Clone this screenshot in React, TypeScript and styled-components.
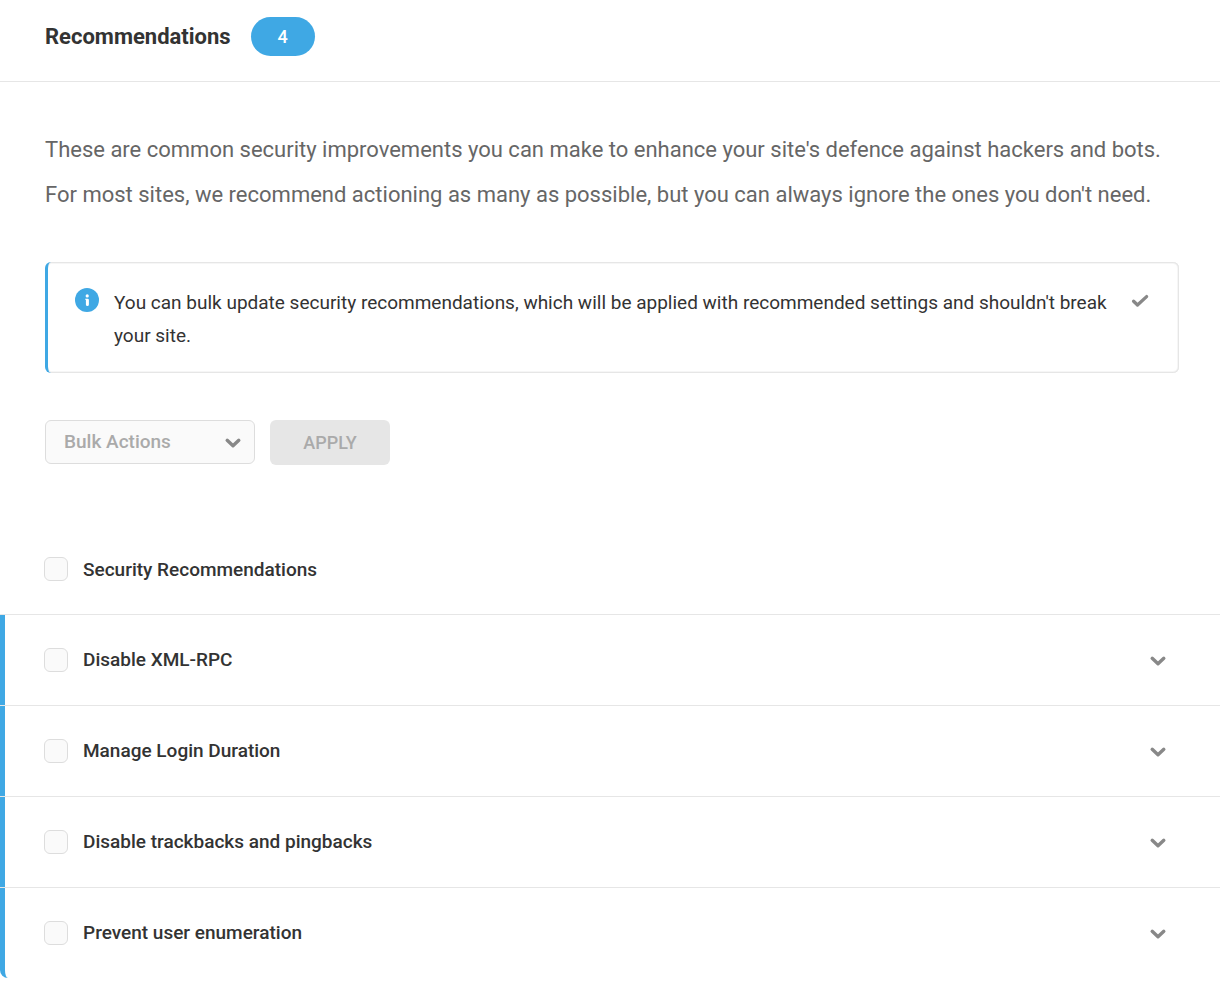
import React from "react";
import styled, { createGlobalStyle } from "styled-components";

const color = {
  text: "#333333",
  muted: "#666666",
  icon: "#888888",
  disabled: "#aaaaaa",
  line: "#e6e6e6",
  field: "#fafafa",
  fieldLine: "#dddddd",
  blue: "#3fa8e4",
};

const GlobalStyle = createGlobalStyle`
  *, *::before, *::after { box-sizing: border-box; }
  body {
    margin: 0;
    background: #fff;
    color: ${color.text};
    font-family: Roboto, "Liberation Sans", sans-serif;
    font-size: 19px;
    line-height: 33px;
  }
`;

const Header = styled.header`
  display: flex;
  align-items: center;
  gap: 20px;
  padding: 17px 45px 25px;
  border-bottom: 1px solid ${color.line};
`;

const Title = styled.h2`
  margin: 0;
  font-size: 22px;
  font-weight: 700;
  line-height: 39px;
`;

const CountTag = styled.span`
  min-width: 64px;
  border-radius: 20px;
  background: ${color.blue};
  color: #fff;
  font-size: 18px;
  font-weight: 500;
  line-height: 39px;
  text-align: center;
`;

const Body = styled.div`
  padding: 45px 41px 0 45px;
`;

const Intro = styled.p`
  margin: 0;
  color: ${color.muted};
  font-size: 22px;
  line-height: 45px;
`;

const Notice = styled.div`
  display: flex;
  align-items: flex-start;
  margin-top: 45px;
  padding: 24px 29px 21px 27px;
  border-left: 3px solid ${color.blue};
  border-radius: 6px;
  box-shadow:
    inset -1px 0 ${color.line},
    inset 0 1px ${color.line},
    inset 0 -1px ${color.line},
    inset -2px 0 #f6f6f6,
    inset 0 2px #f6f6f6,
    inset 0 -2px #f6f6f6;
`;

const NoticeIcon = styled.svg`
  flex: none;
  width: 24px;
  height: 24px;
  margin: 2px 15px 0 0;
`;

const NoticeText = styled.p`
  flex: 1;
  margin: 0 16px 0 0;
`;

const IconButton = styled.button`
  display: flex;
  flex: none;
  padding: 0;
  border: 0;
  background: none;
  color: ${color.icon};
  cursor: pointer;
`;

const Glyph = styled.svg`
  display: block;
  width: 20px;
  height: 32px;
  fill: none;
  stroke: currentColor;
  stroke-linecap: round;
  stroke-linejoin: round;
`;

const Actions = styled.form`
  display: flex;
  align-items: flex-start;
  gap: 15px;
  margin-top: 47px;
`;

const SelectWrap = styled.div`
  display: grid;
  width: 210px;
  color: ${color.icon};

  > * { grid-area: 1 / 1; }
  > svg {
    place-self: center end;
    margin-right: 12px;
    pointer-events: none;
  }
`;

const Select = styled.select`
  appearance: none;
  width: 100%;
  height: 44px;
  padding: 0 40px 2px 18px;
  border: 1px solid ${color.fieldLine};
  border-radius: 6px;
  background: ${color.field};
  color: ${color.disabled};
  font: 500 19px Roboto, "Liberation Sans", sans-serif;
  opacity: 1;
`;

const ApplyButton = styled.button`
  min-width: 120px;
  height: 45px;
  padding: 0 24px;
  border: 0;
  border-radius: 6px;
  background: ${color.line};
  color: ${color.disabled};
  font: 500 18px Roboto, "Liberation Sans", sans-serif;
  text-transform: uppercase;
`;

const ListHead = styled.div`
  display: flex;
  align-items: center;
  margin-top: 59px;
  height: 90px;
  padding: 0 44px;
`;

const List = styled.ul`
  margin: 0;
  padding: 0;
  list-style: none;
`;

const Item = styled.li`
  border-top: 1px solid ${color.line};
`;

const ItemRow = styled.div<{ $last: boolean }>`
  display: flex;
  align-items: center;
  justify-content: space-between;
  height: 90px;
  padding: 0 52px 0 39px;
  border-left: 5px solid ${color.blue};
  border-bottom-left-radius: ${(p) => (p.$last ? "8px" : "0")};
`;

const CheckLabel = styled.label`
  display: flex;
  align-items: center;
  gap: 15px;
  font-weight: 500;
`;

const ItemName = styled.span`
  padding-bottom: 2px;
`;

const Checkbox = styled.input`
  appearance: none;
  width: 24px;
  height: 24px;
  margin: 0;
  border: 1px solid ${color.fieldLine};
  border-radius: 6px;
  background: ${color.field};

  &:checked {
    border-color: ${color.blue};
    background: ${color.blue};
  }
`;

const Chevron = () => (
  <Glyph viewBox="0 0 20 32" strokeWidth="3.4" aria-hidden="true">
    <path d="M4.2 14.3 10 19.8l5.8-5.5" />
  </Glyph>
);

const items = [
  "Disable XML-RPC",
  "Manage Login Duration",
  "Disable trackbacks and pingbacks",
  "Prevent user enumeration",
];

export default function App() {
  return (
    <>
      <GlobalStyle />
      <main>
        <Header>
          <Title>Recommendations</Title>
          <CountTag>4</CountTag>
        </Header>
        <Body>
          <Intro>
            These are common security improvements you can make to enhance your site's defence
            against hackers and bots. For most sites, we recommend actioning as many as possible,
            but you can always ignore the ones you don't need.
          </Intro>
          <Notice>
            <NoticeIcon viewBox="0 0 24 24" aria-hidden="true">
              <circle cx="12" cy="12" r="12" fill={color.blue} />
              <circle cx="12.2" cy="7.9" r="1.6" fill="#fff" />
              <path d="M10.2 10.8h2.4a1.3 1.3 0 0 1 1.3 1.3v4.3a1.5 1.5 0 0 1-3 0v-4.6h-.7z" fill="#fff" />
            </NoticeIcon>
            <NoticeText>
              You can bulk update security recommendations, which will be applied with recommended
              settings and shouldn't break your site.
            </NoticeText>
            <IconButton type="button" aria-label="Dismiss">
              <Glyph viewBox="0 0 20 32" strokeWidth="3.3">
                <path d="M3.6 15.2 7.5 19 16.6 10.6" />
              </Glyph>
            </IconButton>
          </Notice>
          <Actions>
            <SelectWrap>
              <Select aria-label="Bulk actions" disabled>
                <option>Bulk Actions</option>
              </Select>
              <Chevron />
            </SelectWrap>
            <ApplyButton type="button" disabled>
              Apply
            </ApplyButton>
          </Actions>
        </Body>
        <ListHead>
          <CheckLabel>
            <Checkbox type="checkbox" />
            Security Recommendations
          </CheckLabel>
        </ListHead>
        <List>
          {items.map((name, i) => (
            <Item key={name}>
              <ItemRow $last={i === items.length - 1}>
                <CheckLabel>
                  <Checkbox type="checkbox" />
                  <ItemName>{name}</ItemName>
                </CheckLabel>
                <IconButton type="button" aria-label={`Expand ${name}`}>
                  <Chevron />
                </IconButton>
              </ItemRow>
            </Item>
          ))}
        </List>
      </main>
    </>
  );
}
